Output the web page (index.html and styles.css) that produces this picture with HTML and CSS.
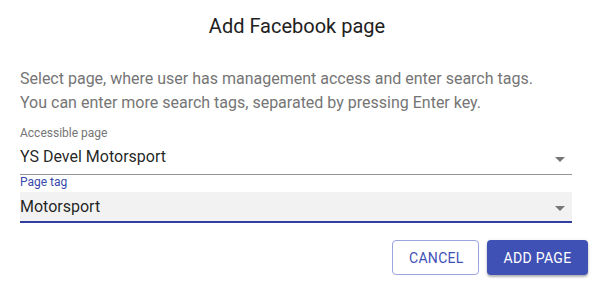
FILE: index.html
```html
<!DOCTYPE html>
<html lang="en">
<head>
<meta charset="utf-8">
<title>Add Facebook page</title>
<link rel="stylesheet" href="styles.css">
</head>
<body>
<div class="dialog">
  <h2 class="dialog-title">Add Facebook page</h2>
  <div class="dialog-content">
    <p class="description">Select page, where user has management access and enter search tags.<br>You can enter more search tags, separated by pressing Enter key.</p>
    <div class="field">
      <label class="field-label">Accessible page</label>
      <div class="field-input">
        <span class="field-value">YS Devel Motorsport</span>
        <span class="arrow"></span>
      </div>
    </div>
    <div class="field field-focused">
      <label class="field-label">Page tag</label>
      <div class="field-input">
        <span class="field-value">Motorsport</span>
        <span class="arrow"></span>
      </div>
    </div>
  </div>
  <div class="dialog-actions">
    <button class="btn btn-outlined">CANCEL</button>
    <button class="btn btn-raised">ADD PAGE</button>
  </div>
</div>
</body>
</html>
```

FILE: styles.css
```css
html, body {
  margin: 0;
  padding: 0;
  background: #ffffff;
}

body {
  font-family: Roboto, "Liberation Sans", Arial, sans-serif;
  width: 594px;
  height: 283px;
  overflow: hidden;
}

.dialog {
  display: flex;
  flex-direction: column;
}

.dialog-title {
  margin: 0;
  padding-top: 10px;
  font-size: 20px;
  font-weight: 400;
  line-height: 32px;
  text-align: center;
  color: #212121;
}

.dialog-content {
  padding: 25px 22px 0 20px;
}

.description {
  margin: 0;
  font-size: 16px;
  line-height: 24px;
  color: #757575;
}

.field {
  display: flex;
  flex-direction: column;
  width: 552px;
}

.field-label {
  font-size: 12px;
  line-height: 16px;
  color: #757575;
}

.field:first-of-type {
  margin-top: 10px;
}

.field:first-of-type .field-label {
  margin-bottom: 4px;
}

.field:first-of-type .field-input {
  padding-bottom: 5px;
  border-bottom: 1px solid #949494;
}

.field-input {
  display: flex;
  align-items: center;
  font-size: 16px;
  line-height: 24px;
  color: rgba(0, 0, 0, 0.87);
}

.field-value {
  flex: 1;
}

.arrow {
  width: 0;
  height: 0;
  margin: 4px 7px 0 0;
  border-left: 5px solid transparent;
  border-right: 5px solid transparent;
  border-top: 5px solid #767676;
}

.field-focused .field-label {
  line-height: 14px;
  margin-bottom: 3px;
  color: #3949ab;
}

.field-focused .field-input {
  padding: 3px 0 2px;
  background: #f2f2f2;
  border-bottom: 2px solid #303f9f;
}

.field-focused .arrow {
  margin-top: 3px;
}

.dialog-actions {
  display: flex;
  justify-content: flex-end;
  gap: 8px;
  padding: 17px 6px 0 0;
}

.btn {
  height: 35px;
  box-sizing: border-box;
  padding: 0 16px;
  font-family: Roboto, "Liberation Sans", Arial, sans-serif;
  font-size: 14px;
  font-weight: 400;
  letter-spacing: 0.3px;
  border-radius: 4px;
  cursor: pointer;
}

.btn-outlined {
  width: 87px;
  background: #ffffff;
  color: #3f51b5;
  border: 1px solid #9aa5e0;
}

.btn-raised {
  width: 101px;
  background: #3f51b5;
  color: #ffffff;
  border: none;
  box-shadow: 0 2px 2px rgba(0, 0, 0, 0.24), 0 1px 4px rgba(0, 0, 0, 0.12);
}
```
